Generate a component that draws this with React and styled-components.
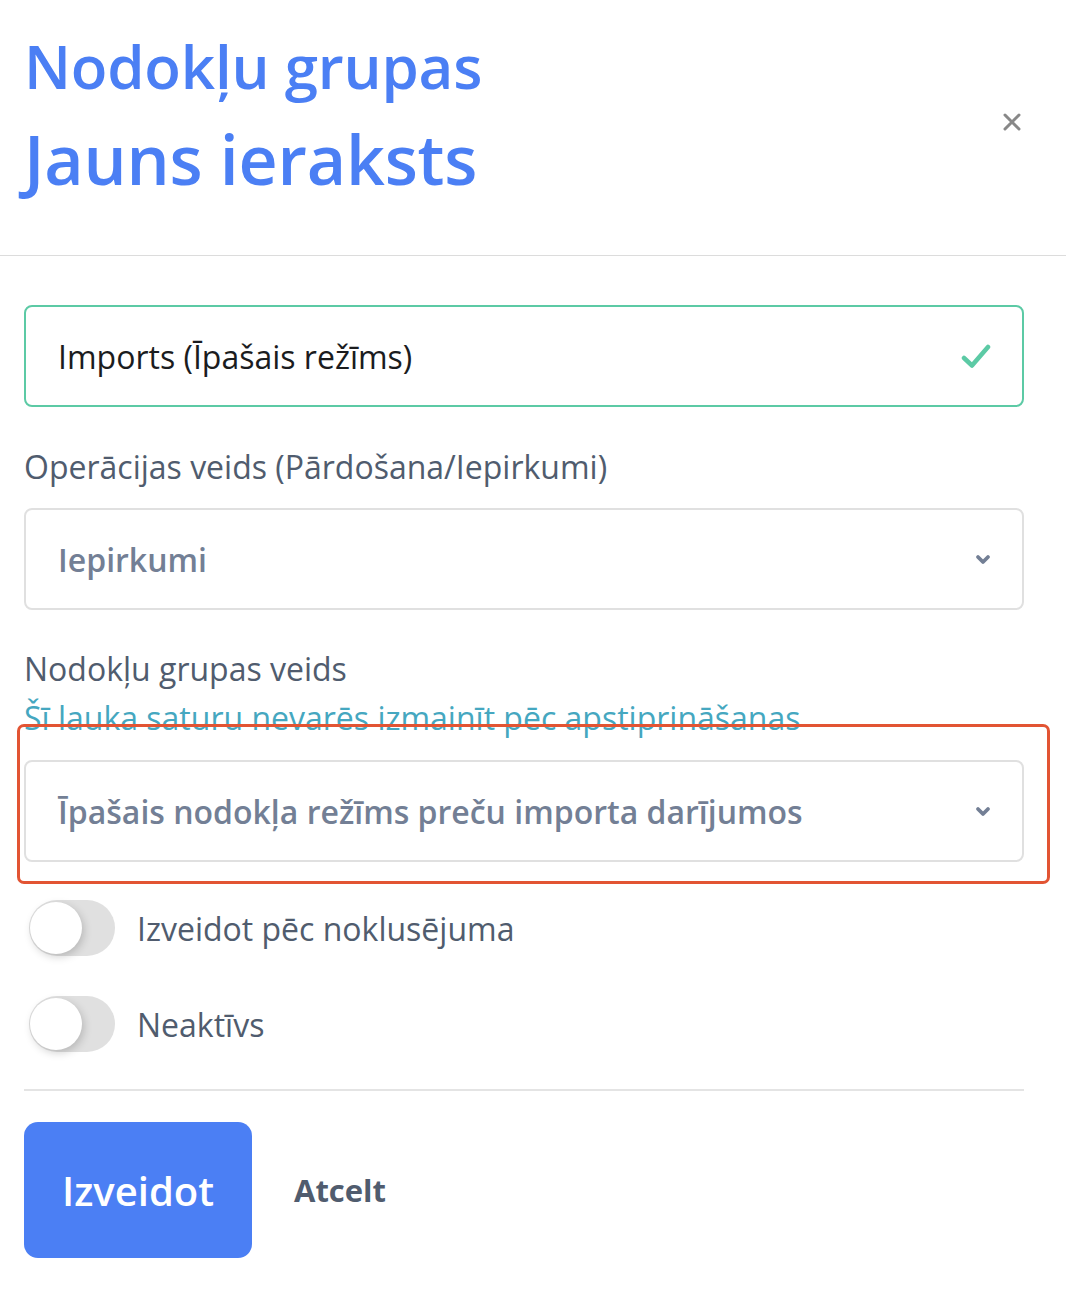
import styled, { createGlobalStyle } from "styled-components";

const GlobalStyle = createGlobalStyle`
  html, body {
    margin: 0;
    padding: 0;
    background: #ffffff;
  }
  body {
    font-family: "Open Sans", "Liberation Sans", sans-serif;
  }
`;

const colors = {
  blue: "#4b7ff4",
  green: "#5ccaa5",
  text: "#1b1c1e",
  label: "#505c6e",
  muted: "#737f95",
  hint: "#45a7c0",
  border: "#e0e0e0",
  annotate: "#e25433",
};

const Header = styled.header`
  display: flex;
  align-items: center;
  justify-content: space-between;
  padding: 19px 44px 52px 24px;
  border-bottom: 1px solid #dcdcdc;
`;

const Title = styled.h1`
  margin: 0;
  font-size: ${(p) => (p.$large ? 68 : 60)}px;
  font-weight: 600;
  line-height: ${(p) => (p.$large ? 89 : 95)}px;
  color: ${colors.blue};
  letter-spacing: -0.2px;
`;

const CloseButton = styled.button`
  display: flex;
  align-items: center;
  justify-content: center;
  width: 24px;
  height: 24px;
  margin-top: 22px;
  margin-right: -2px;
  padding: 0;
  border: none;
  background: none;
  cursor: pointer;
`;

const Body = styled.main`
  display: flex;
  flex-direction: column;
  padding: 49px 42px 0 24px;
`;

const Field = styled.div`
  position: relative;
  display: flex;
  align-items: center;
  justify-content: space-between;
  height: 102px;
  box-sizing: border-box;
  padding: 0 31px 0 32px;
  border: 2px solid ${(p) => (p.$valid ? colors.green : colors.border)};
  border-radius: 8px;
  background: #fff;
`;

const FieldText = styled.span`
  font-size: 32px;
  font-weight: ${(p) => (p.$muted ? 600 : 400)};
  color: ${(p) => (p.$muted ? colors.muted : colors.text)};
  letter-spacing: 0;
`;

const Label = styled.div`
  font-size: 32px;
  line-height: 42px;
  color: ${colors.label};
  letter-spacing: 0;
  margin-top: ${(p) => p.$top || 0}px;
  margin-bottom: ${(p) => p.$bottom || 0}px;
`;

const Hint = styled.div`
  font-size: 32px;
  line-height: 42px;
  color: ${colors.hint};
  letter-spacing: 0;
  margin-top: 7px;
  margin-bottom: 21px;
`;

const Highlighted = styled.div`
  position: relative;
`;

const Highlight = styled.div`
  position: absolute;
  top: -36px;
  bottom: -22px;
  left: -7px;
  right: -26px;
  border: 3px solid ${colors.annotate};
  border-radius: 7px;
  pointer-events: none;
`;

const Toggles = styled.div`
  display: flex;
  flex-direction: column;
  gap: 40px;
  margin-top: 38px;
  padding-left: 5px;
`;

const ToggleRow = styled.label`
  display: flex;
  align-items: center;
  gap: 22px;
`;

const Track = styled.span`
  position: relative;
  display: inline-block;
  width: 86px;
  height: 56px;
  border-radius: 28px;
  background: #e0e0e0;
  flex-shrink: 0;
`;

const Knob = styled.span`
  position: absolute;
  top: 2px;
  left: 1px;
  width: 52px;
  height: 52px;
  border-radius: 50%;
  background: #fff;
  box-shadow: 2px 3px 8px rgba(0, 0, 0, 0.18);
`;

const ToggleText = styled.span`
  font-size: 32px;
  color: ${colors.label};
  letter-spacing: 0;
`;

const Divider = styled.hr`
  width: 100%;
  margin: 37px 0 0;
  border: none;
  border-top: 2px solid #e4e4e4;
`;

const Actions = styled.div`
  display: flex;
  align-items: center;
  gap: 42px;
  margin-top: 31px;
`;

const PrimaryButton = styled.button`
  width: 228px;
  height: 136px;
  border: none;
  border-radius: 14px;
  background: ${colors.blue};
  color: #fff;
  font-family: inherit;
  font-size: 40px;
  font-weight: 600;
  cursor: pointer;
`;

const TextButton = styled.button`
  border: none;
  background: none;
  padding: 0;
  font-family: inherit;
  font-size: 31px;
  font-weight: 700;
  color: ${colors.label};
  cursor: pointer;
`;

const Chevron = () => (
  <svg width="16" height="11" viewBox="0 0 16 11">
    <polyline
      points="3,3 8,8 13,3"
      fill="none"
      stroke={colors.muted}
      strokeWidth="3.8"
      strokeLinejoin="round"
      strokeLinecap="round"
    />
  </svg>
);

const Check = () => (
  <svg width="30" height="26" viewBox="0 0 30 26">
    <polyline
      points="3,15 11,22.5 27,4"
      fill="none"
      stroke={colors.green}
      strokeWidth="4.5"
      strokeLinejoin="round"
      strokeLinecap="round"
    />
  </svg>
);

const Toggle = ({ label }) => (
  <ToggleRow>
    <Track>
      <Knob />
    </Track>
    <ToggleText>{label}</ToggleText>
  </ToggleRow>
);

const App = () => (
  <>
    <GlobalStyle />
    <Header>
      <div>
        <Title>Nodokļu grupas</Title>
        <Title $large>Jauns ieraksts</Title>
      </div>
      <CloseButton aria-label="Aizvērt">
        <svg width="20" height="20" viewBox="0 0 20 20">
          <path
            d="M3 3 L17 17 M17 3 L3 17"
            stroke="#888"
            strokeWidth="3"
            strokeLinecap="round"
          />
        </svg>
      </CloseButton>
    </Header>
    <Body>
      <Field $valid>
        <FieldText>Imports (Īpašais režīms)</FieldText>
        <Check />
      </Field>

      <Label $top={39} $bottom={20}>
        Operācijas veids (Pārdošana/Iepirkumi)
      </Label>
      <Field>
        <FieldText $muted>Iepirkumi</FieldText>
        <Chevron />
      </Field>

      <Label $top={38}>Nodokļu grupas veids</Label>
      <Hint>Šī lauka saturu nevarēs izmainīt pēc apstiprināšanas</Hint>
      <Highlighted>
        <Field>
          <FieldText $muted>Īpašais nodokļa režīms preču importa darījumos</FieldText>
          <Chevron />
        </Field>
        <Highlight />
      </Highlighted>

      <Toggles>
        <Toggle label="Izveidot pēc noklusējuma" />
        <Toggle label="Neaktīvs" />
      </Toggles>

      <Divider />

      <Actions>
        <PrimaryButton>Izveidot</PrimaryButton>
        <TextButton>Atcelt</TextButton>
      </Actions>
    </Body>
  </>
);

export default App;
